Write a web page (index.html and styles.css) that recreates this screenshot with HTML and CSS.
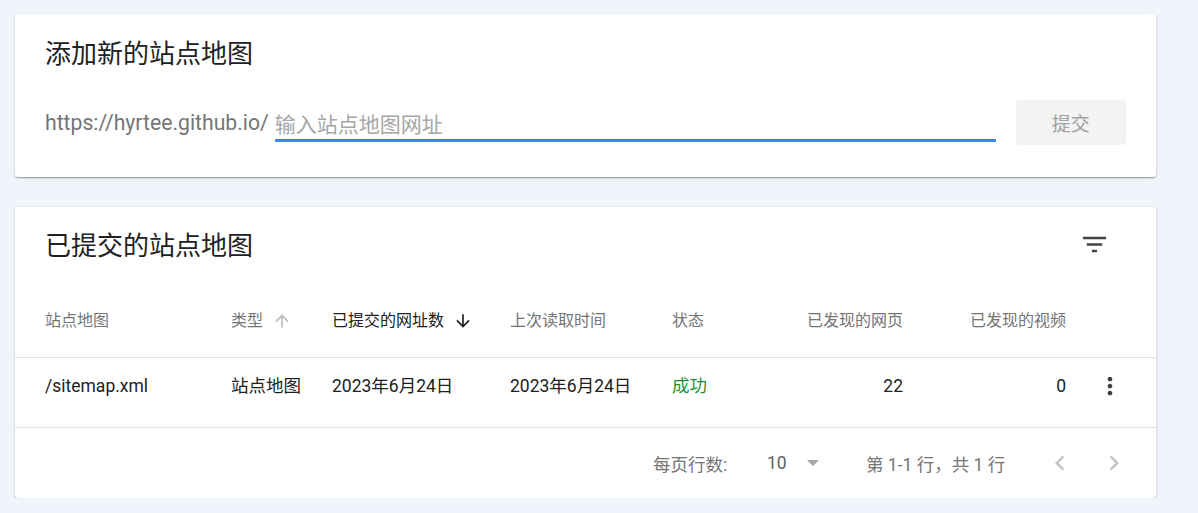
FILE: index.html
```html
<!DOCTYPE html>
<html lang="zh-CN">
<head>
<meta charset="utf-8">
<title>站点地图</title>
<link rel="stylesheet" href="styles.css">
</head>
<body>
<section class="card add-card">
  <h2 class="card-title">添加新的站点地图</h2>
  <div class="add-row">
    <span class="prefix">https://hyrtee.github.io/</span>
    <input class="url-input" type="text" placeholder="输入站点地图网址">
    <button class="submit-btn" type="button">提交</button>
  </div>
</section>

<section class="card list-card">
  <div class="list-head">
    <h2 class="card-title">已提交的站点地图</h2>
    <svg class="filter-icon" viewBox="0 0 24 24" width="31" height="31"><path d="M10 18h4v-2h-4v2zM3 6v2h18V6H3zm3 7h12v-2H6v2z" fill="#444"/></svg>
  </div>
  <div class="grid header-row">
    <div class="cell">站点地图</div>
    <div class="cell">类型<svg class="sort-icon" viewBox="0 0 24 24" width="20" height="20"><path d="M4 12l1.41 1.41L11 7.83V20h2V7.83l5.58 5.59L20 12l-8-8-8 8z" fill="#bdbdbd"/></svg></div>
    <div class="cell active">已提交的网址数<svg class="sort-icon" viewBox="0 0 24 24" width="20" height="20"><path d="M20 12l-1.41-1.41L13 16.17V4h-2v12.17l-5.58-5.59L4 12l8 8 8-8z" fill="#212121"/></svg></div>
    <div class="cell">上次读取时间</div>
    <div class="cell">状态</div>
    <div class="cell num">已发现的网页</div>
    <div class="cell num">已发现的视频</div>
    <div class="cell"></div>
  </div>
  <div class="grid data-row">
    <div class="cell">/sitemap.xml</div>
    <div class="cell">站点地图</div>
    <div class="cell">2023年6月24日</div>
    <div class="cell">2023年6月24日</div>
    <div class="cell ok">成功</div>
    <div class="cell num">22</div>
    <div class="cell num">0</div>
    <div class="cell more"><svg viewBox="0 0 24 24" width="28" height="28"><path d="M12 8c1.1 0 2-.9 2-2s-.9-2-2-2-2 .9-2 2 .9 2 2 2zm0 2c-1.1 0-2 .9-2 2s.9 2 2 2 2-.9 2-2-.9-2-2-2zm0 6c-1.1 0-2 .9-2 2s.9 2 2 2 2-.9 2-2-.9-2-2-2z" fill="#3c3c3c"/></svg></div>
  </div>
  <div class="pager">
    <span class="pager-label">每页行数:</span>
    <span class="pager-select"><span class="rows-num">10</span><span class="caret"></span></span>
    <span class="pager-range">第 1-1 行，共 1 行</span>
    <span class="pager-btn"><svg viewBox="0 0 24 24" width="30" height="30"><path d="M15.41 7.41L14 6l-6 6 6 6 1.41-1.41L10.83 12z" fill="#c4c4c4"/></svg></span>
    <span class="pager-btn next"><svg viewBox="0 0 24 24" width="30" height="30"><path d="M10 6L8.59 7.41 13.17 12l-4.58 4.59L10 18l6-6z" fill="#c4c4c4"/></svg></span>
  </div>
</section>
</body>
</html>
```

FILE: styles.css
```css
* { box-sizing: border-box; }
html, body { margin: 0; padding: 0; }
body {
  background: #f1f4fb;
  font-family: Roboto, "Noto Sans CJK SC", sans-serif;
  color: #212121;
  padding: 14px 0 0 15px;
}
.card {
  width: 1141px;
  background: #fff;
  border-radius: 3px;
  box-shadow: 0 1px 3px rgba(0,0,0,.2), 0 1px 1px rgba(0,0,0,.14), 0 2px 1px -1px rgba(0,0,0,.12);
}
.card-title {
  margin: 0;
  font-weight: 400;
  font-size: 26px;
  line-height: 32px;
  color: #202124;
}
.add-card {
  padding: 24px 30px 32px 30px;
}
.add-row {
  display: flex;
  align-items: center;
  height: 45px;
  margin-top: 30px;
}
.prefix {
  font-size: 21.2px;
  line-height: 24px;
  color: #757575;
  margin-right: 6px;
}
.url-input {
  width: 721px;
  align-self: flex-end;
  margin-bottom: 3px;
  height: 31px;
  padding: 0;
  border: none;
  border-bottom: 3px solid #4285f4;
  outline: none;
  font-family: Roboto, "Noto Sans CJK SC", sans-serif;
  font-size: 21px;
  color: #212121;
  background: transparent;
}
.url-input::placeholder { color: #a6a6a6; }
.submit-btn {
  margin-left: 20px;
  width: 110px;
  height: 45px;
  border: none;
  border-radius: 4px;
  background: #f3f3f3;
  color: #a0a0a0;
  font-family: Roboto, "Noto Sans CJK SC", sans-serif;
  font-size: 19px;
}
.list-card {
  margin-top: 30px;
}
.list-head {
  display: flex;
  align-items: center;
  justify-content: space-between;
  height: 55px;
  padding: 23px 46px 0 30px;
}
.filter-icon { display: block; margin-bottom: 4px; flex: none; }
.grid {
  display: grid;
  grid-template-columns: 186px 101px 178px 162px 88px 143px 163px 90px;
  padding-left: 30px;
}
.header-row {
  margin-top: 23px;
  height: 73px;
  align-items: center;
  border-bottom: 1px solid #e0e0e0;
  font-size: 16px;
  color: #757575;
}
.header-row .cell { display: flex; align-items: center; line-height: 24px; }
.header-row .cell.num { justify-content: flex-end; }
.header-row .active { color: #212121; }
.sort-icon { margin-left: 9px; display: block; }
.data-row {
  height: 70px;
  padding-top: 16px;
  align-items: start;
  border-bottom: 1px solid #e0e0e0;
  font-size: 17.5px;
  line-height: 24px;
  color: #212121;
}
.num { text-align: right; }
.ok { color: #1e8e3e; }
.more { padding-left: 30px; }
.more svg { display: block; margin-top: -2px; }
.pager {
  display: flex;
  justify-content: flex-end;
  align-items: center;
  height: 70px;
  padding-right: 27px;
  font-size: 17.5px;
  color: #757575;
}
.pager-label { width: 114px; }
.pager-select { width: 99px; display: flex; align-items: center; }
.rows-num { color: #616161; }
.caret {
  margin-left: 20px;
  width: 0; height: 0;
  border-left: 6.5px solid transparent;
  border-right: 6.5px solid transparent;
  border-top: 6.5px solid #a6a6a6;
}
.pager-range { width: 179px; }
.pager-btn { width: 30px; height: 30px; }
.pager-btn svg { display: block; }
.pager-btn.next { margin-left: 24px; }
```
